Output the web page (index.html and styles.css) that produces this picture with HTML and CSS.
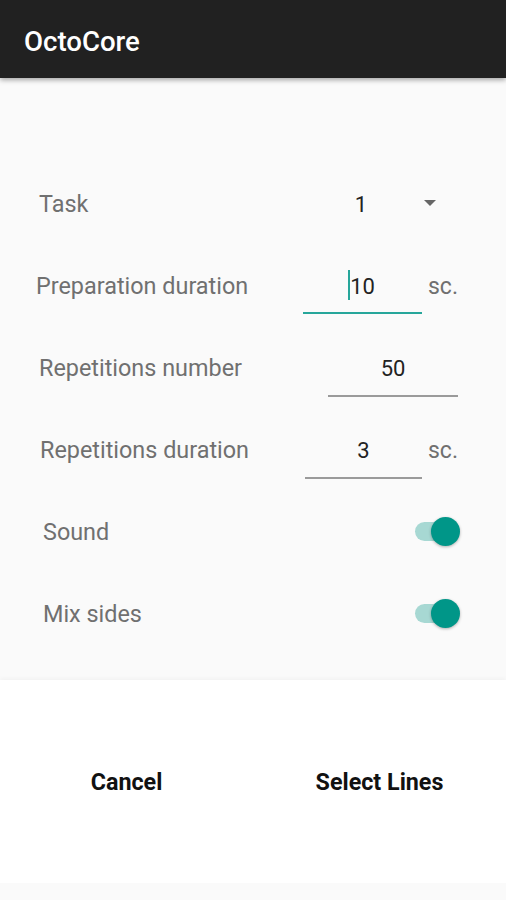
FILE: index.html
```html
<!DOCTYPE html>
<html>
<head>
<meta charset="utf-8">
<link rel="stylesheet" href="styles.css">
</head>
<body>
<div class="screen">
  <header class="appbar"><span class="title">OctoCore</span></header>
  <main class="form">
    <div class="row">
      <span class="label l-39">Task</span>
      <div class="spinner">
        <span class="spin-value">1</span>
        <svg class="spin-arrow" width="14" height="8" viewBox="0 0 14 8"><path d="M1 1 L13 1 L7 7 Z" fill="#666"/></svg>
      </div>
    </div>
    <div class="row">
      <span class="label l-36">Preparation duration</span>
      <div class="field f-prep focused"><span class="val"><span class="caret"></span>10</span></div>
      <span class="unit">sc.</span>
    </div>
    <div class="row">
      <span class="label l-39">Repetitions number</span>
      <div class="field f-reps"><span class="val">50</span></div>
    </div>
    <div class="row">
      <span class="label l-40">Repetitions duration</span>
      <div class="field f-dur"><span class="val">3</span></div>
      <span class="unit">sc.</span>
    </div>
    <div class="row">
      <span class="label l-43">Sound</span>
      <div class="switch"><span class="track"></span><span class="thumb"></span></div>
    </div>
    <div class="row">
      <span class="label l-43">Mix sides</span>
      <div class="switch"><span class="track"></span><span class="thumb"></span></div>
    </div>
  </main>
  <footer class="actions">
    <button class="btn">Cancel</button>
    <button class="btn">Select Lines</button>
  </footer>
  <div class="bottom-strip"></div>
</div>
</body>
</html>
```
FILE: styles.css
```css
* { box-sizing: border-box; }
html, body { margin: 0; padding: 0; background: #fafafa; }
body { font-family: Roboto, "Liberation Sans", sans-serif; width: 506px; height: 900px; overflow: hidden; }
.screen { display: flex; flex-direction: column; height: 900px; }
.appbar {
  height: 78px; flex: none; background: #212121; display: flex; align-items: center;
  padding-left: 24px; box-shadow: 0 2px 5px rgba(0,0,0,0.35); position: relative; z-index: 2;
}
.title { color: #fff; font-size: 27.6px; font-weight: 500; margin-top: 4px; }
.form { padding-top: 84px; height: 602px; flex: none; background: #fafafa; }
.row { height: 82px; display: flex; align-items: center; position: relative; }
.label { font-size: 23.4px; color: #707070; flex: 1; margin-top: 1px; }
.l-36 { padding-left: 36px; }
.l-39 { padding-left: 39px; }
.l-40 { padding-left: 40px; }
.l-43 { padding-left: 43px; }
.spinner { display: flex; align-items: center; width: 140px; margin-right: 66px; margin-top: 2px; }
.spin-value { font-size: 22px; color: #222; width: 67px; text-align: right; }
.spin-arrow { margin-left: 56px; margin-top: -3px; }
.field {
  position: relative; height: 82px; display: flex; align-items: center; justify-content: center;
  font-size: 22px; color: #222; padding-top: 2px;
}
.field::after { content: ""; position: absolute; left: 0; right: 0; top: 69px; height: 1.5px; background: #9a9a9a; }
.field.focused::after { background: #26a69a; height: 2px; top: 68px; }
.val { display: inline-block; position: relative; }
.caret { position: absolute; left: -2px; top: -4px; width: 2px; height: 30px; background: #26a69a; }
.f-prep { width: 119px; }
.f-reps { width: 130px; margin-right: 48px; }
.f-dur { width: 117px; }
.unit { font-size: 23px; color: #707070; width: 84px; padding-left: 6px; margin-top: 2px; }
.switch { position: relative; width: 46px; height: 30px; margin-right: 46px; }
.track { position: absolute; left: 1px; top: 6px; width: 34px; height: 19px; border-radius: 10px; background: #a7d8d3; }
.thumb { position: absolute; left: 17px; top: 1px; width: 29px; height: 29px; border-radius: 50%; background: #009688; box-shadow: 0 1px 3px rgba(0,0,0,0.3); }
.actions {
  background: #fff; height: 203px; flex: none; display: flex; align-items: center;
  box-shadow: 0 -2px 4px rgba(0,0,0,0.03);
}
.btn {
  flex: 1; background: none; border: none; font-family: Roboto, "Liberation Sans", sans-serif;
  font-size: 23.3px; font-weight: 700; color: #111; padding: 0; height: 60px;
}
.bottom-strip { flex: 1; background: #fafafa; }
```
